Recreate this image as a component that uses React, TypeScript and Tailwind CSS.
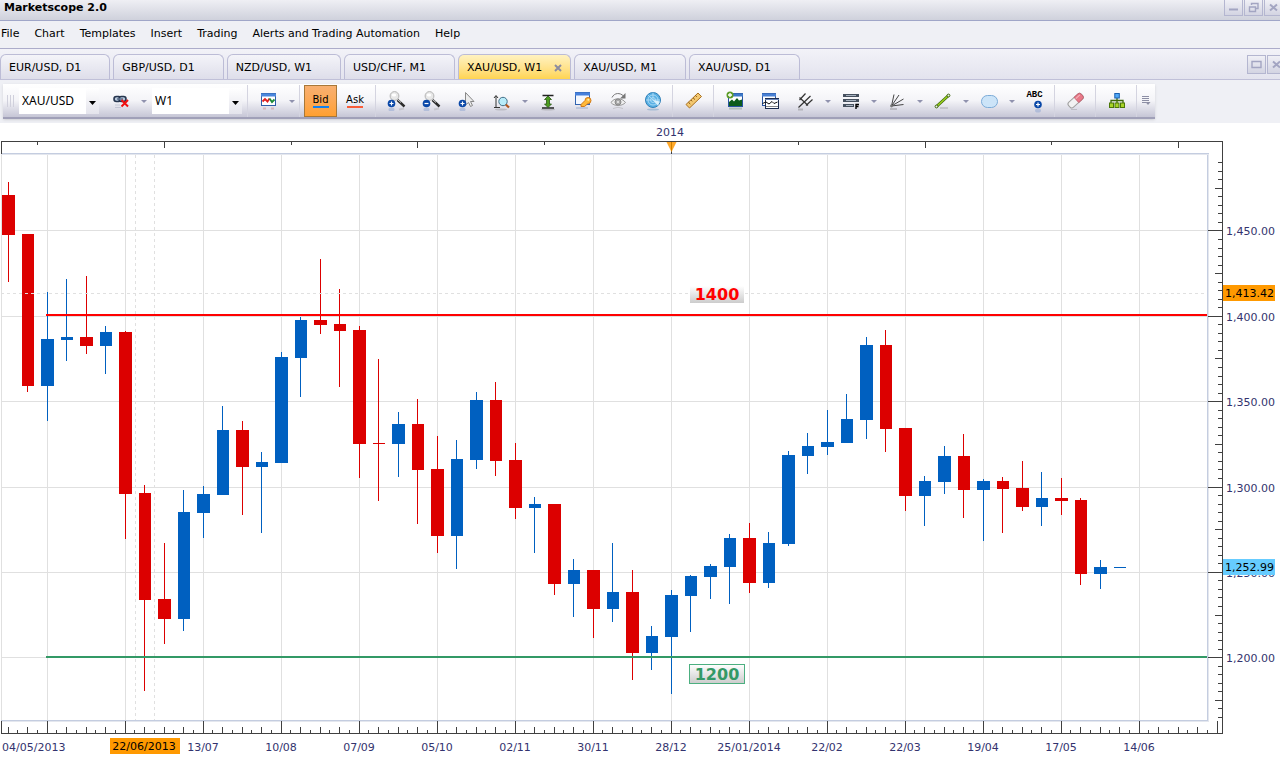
import type { ReactNode } from 'react';

const MENU = ['File', 'Chart', 'Templates', 'Insert', 'Trading', 'Alerts and Trading Automation', 'Help'];

const TABS = ['EUR/USD, D1', 'GBP/USD, D1', 'NZD/USD, W1', 'USD/CHF, M1', 'XAU/USD, W1', 'XAU/USD, M1', 'XAU/USD, D1'];
const ACTIVE_TAB = 4;

const RED = '#dc0000';
const BLUE = '#0060c0';

// [up, high, body top, body bottom, low], one per week
const CANDLES: [number, number, number, number, number][] = [
  [0, 182, 195, 235, 282],
  [0, 234, 234, 386, 392],
  [1, 292, 339, 386, 421],
  [1, 279, 337, 340, 361],
  [0, 276, 337, 346, 354],
  [1, 326, 332, 346, 374],
  [0, 331, 332, 494, 539],
  [0, 485, 493, 600, 691],
  [0, 543, 599, 619, 644],
  [1, 490, 512, 619, 631],
  [1, 486, 494, 513, 538],
  [1, 406, 430, 495, 495],
  [0, 421, 430, 467, 515],
  [1, 452, 462, 467, 533],
  [1, 352, 357, 463, 463],
  [1, 317, 320, 358, 397],
  [0, 259, 320, 325, 334],
  [0, 289, 324, 331, 387],
  [0, 326, 330, 444, 478],
  [0, 359, 443, 444, 501],
  [1, 412, 424, 444, 477],
  [0, 399, 424, 470, 524],
  [0, 436, 469, 536, 553],
  [1, 440, 459, 536, 569],
  [1, 392, 400, 460, 469],
  [0, 382, 400, 461, 476],
  [0, 443, 460, 508, 519],
  [1, 497, 504, 508, 553],
  [0, 504, 504, 584, 595],
  [1, 559, 570, 584, 617],
  [0, 570, 570, 609, 638],
  [1, 543, 592, 609, 622],
  [0, 570, 592, 653, 680],
  [1, 626, 636, 653, 670],
  [1, 590, 595, 637, 694],
  [1, 575, 576, 596, 632],
  [1, 564, 566, 577, 599],
  [1, 534, 538, 567, 604],
  [0, 523, 538, 583, 593],
  [1, 532, 543, 583, 588],
  [1, 451, 455, 544, 546],
  [1, 433, 446, 456, 474],
  [1, 410, 442, 447, 455],
  [1, 394, 419, 443, 443],
  [1, 337, 345, 420, 439],
  [0, 330, 345, 429, 452],
  [0, 428, 428, 496, 511],
  [1, 476, 481, 496, 526],
  [1, 446, 456, 482, 494],
  [0, 434, 456, 490, 518],
  [1, 479, 481, 490, 541],
  [0, 477, 481, 489, 533],
  [0, 461, 488, 507, 511],
  [1, 472, 498, 507, 526],
  [0, 478, 498, 501, 515],
  [0, 498, 500, 574, 585],
  [1, 560, 567, 574, 589],
  [1, 567, 567, 568, 568],
];

const DATES = ['13/07', '10/08', '07/09', '05/10', '02/11', '30/11', '28/12', '25/01/2014', '22/02', '22/03', '19/04', '17/05', '14/06'];

const PRICES = [1450, 1400, 1350, 1300, 1250, 1200];

const priceY = (price: number) => Math.round(657.2 - (price - 1200) * 1.707);
const weekX = (i: number) => Math.floor(8 + 19.5 * i);

function Chart() {
  const rightTicks = Array.from({ length: 66 }, (_, i) => 1165 + i * 5);
  const bottomTicks = Array.from({ length: 124 }, (_, i) => i);
  const topTicks = Array.from({ length: 10 }, (_, i) => i);
  const columns = Array.from({ length: 15 }, (_, i) => 47 + 78 * i);

  return (
    <svg
      viewBox="0 123 1280 636"
      className="block w-full bg-white font-['DejaVu_Sans',Verdana,sans-serif] text-[11px]"
      role="img"
      aria-label="XAU/USD, W1"
    >
      <defs>
        <linearGradient id="label" x1="0" y1="0" x2="0" y2="1">
          <stop offset="0" stopColor="#ffffff" />
          <stop offset="1" stopColor="#cccccc" />
        </linearGradient>
      </defs>

      <g shapeRendering="crispEdges">
        {/* grid */}
        <g fill="#e0e0e0">
          <rect x="1" y="155" width="1" height="566" />
          {columns.map((x) => (
            <rect key={x} x={x} y="155" width="1" height="566" />
          ))}
          {PRICES.map((p) => (
            <rect key={p} x="1" y={priceY(p)} width="1206" height="1" />
          ))}
        </g>
        <g fill="#c4cde0">
          <rect x="1" y="153" width="1208" height="1" />
          <rect x="1207" y="153" width="1" height="568" />
          <rect x="1" y="720" width="1208" height="1" />
        </g>
        <g fill="#e4e7ee">
          <rect x="1" y="154" width="1207" height="1" />
          <rect x="1208" y="154" width="1" height="568" />
          <rect x="1" y="721" width="1208" height="1" />
        </g>
        <path d="M135.5 155V720M154.5 155V720" stroke="#e0e0e0" strokeDasharray="3 3" />

        {/* axes */}
        <g fill="#404040">
          <rect x="1" y="141" width="1222" height="1" />
          <rect x="1" y="141" width="1" height="13" />
          <rect x="1222" y="141" width="1" height="593" />
          <rect x="1" y="733" width="1222" height="1" />
          <rect x="1" y="721" width="1" height="12" />
          <rect x="1217" y="721" width="1" height="12" />
          {topTicks.map((i) => (
            <rect key={i} x={Math.round(37 + 126.8 * i)} y="142" width="1" height={i === 5 ? 12 : i % 2 ? 6 : 3} />
          ))}
          {rightTicks.map((p) => {
            const w = p % 50 === 0 ? 14 : p % 25 === 0 ? 7 : 4;
            return <rect key={p} x={1222 - w} y={priceY(p)} width={w} height="1" />;
          })}
          {bottomTicks.map((i) => {
            const h = i % 8 === 4 ? 12 : i % 2 ? 3 : 6;
            return <rect key={i} x={Math.floor(8 + 9.75 * i)} y={733 - h} width="1" height={h} />;
          })}
        </g>

        {/* candles */}
        {CANDLES.map(([up, high, top, bottom, low], i) => {
          const x = weekX(i);
          const odd = i % 2 === 1;
          return (
            <g key={i} fill={up ? BLUE : RED}>
              <rect x={x} y={high} width="1" height={low - high} />
              <rect x={odd ? x - 5 : x - 6} y={top} width={odd ? 12 : 13} height={bottom - top} />
            </g>
          );
        })}

        <path d="M1 293.5H1207" stroke="#e0e0e0" strokeDasharray="3 3" />
        <rect x="46" y="314" width="1161" height="2" fill="#ff0000" />
        <rect x="46" y="656" width="1161" height="2" fill="#339966" />

        {/* level labels */}
        <rect x="690" y="286" width="54" height="17" fill="url(#label)" />
        <rect x="689.5" y="664.5" width="55" height="19" fill="url(#label)" stroke="#4caf80" />
      </g>

      <path d="M666.5 142H676.5L671.5 152Z" fill="#ffa829" />
      <path d="M671.5 142V151" stroke="#d08000" />

      <g textAnchor="middle" className="text-base font-bold">
        <text x="717" y="300" fill="#ff0000">1400</text>
        <text x="717" y="680" fill="#339966">1200</text>
      </g>

      <g fill="#33336e">
        <text x="670" y="136" textAnchor="middle">2014</text>
        {PRICES.map((p) => (
          <text key={p} x="1226" y={priceY(p) + 5}>
            {p.toLocaleString('en-US', { minimumFractionDigits: 2 })}
          </text>
        ))}
        <text x="2" y="751">04/05/2013</text>
        {DATES.map((d, i) => (
          <text key={d} x={203 + 78 * i} y="751" textAnchor="middle">
            {d}
          </text>
        ))}
      </g>

      <rect x="110" y="738" width="70" height="16" fill="#ff9900" />
      <rect x="1223" y="285" width="52" height="16" fill="#ff9900" />
      <rect x="1223" y="559" width="52" height="16" fill="#66ccff" />
      <g fill="#000000">
        <text x="144" y="750" textAnchor="middle">22/06/2013</text>
        <text x="1225" y="297">1,413.42</text>
        <text x="1225" y="571">1,252.99</text>
      </g>
    </svg>
  );
}

function WindowButton({ label, children, large }: { label: string; children: ReactNode; large?: boolean }) {
  return (
    <button
      aria-label={label}
      className={`flex w-[19px] items-center justify-center border border-[#b4b6d0] bg-gradient-to-b from-[#f0f0f6] to-[#d3d4e2] ${
        large ? 'h-[19px]' : 'h-4 border-t-0'
      }`}
    >
      <svg width="11" height="11" viewBox="0 0 11 11" fill="none" stroke="#a3a5c2" strokeWidth="2">
        {children}
      </svg>
    </button>
  );
}

function Section({ children }: { children: ReactNode }) {
  return <div className="flex items-center border-r border-[#d4d4e0] pr-0.5 pl-[3px]">{children}</div>;
}

function Tool({ label, children }: { label: string; children: ReactNode }) {
  return (
    <button aria-label={label} className="flex h-8 w-[35px] items-center justify-center">
      <svg width="20" height="20" viewBox="0 0 20 20" fill="none">
        {children}
      </svg>
    </button>
  );
}

function More({ label }: { label: string }) {
  return (
    <button aria-label={label} className="flex h-8 w-[11px] items-center justify-center">
      <svg width="6" height="3" viewBox="0 0 6 3" fill="#9092ae">
        <path d="M0 0H6L3 3Z" />
      </svg>
    </button>
  );
}

function Combo({ label, value, options, className }: { label: string; value: string; options: string[]; className: string }) {
  return (
    <label className={`relative flex h-[26px] items-center ${className}`}>
      <select
        aria-label={label}
        defaultValue={value}
        className="h-full w-full appearance-none bg-white pr-4 pl-[3px] font-['Noto_Sans',sans-serif] text-xs text-black"
      >
        {options.map((o) => (
          <option key={o}>{o}</option>
        ))}
      </select>
      <span className="pointer-events-none absolute right-0 flex h-[26px] w-[13px] items-center justify-center bg-gradient-to-b from-white to-[#e4e4ec] pt-1">
        <svg width="7" height="4" viewBox="0 0 7 4">
          <path d="M0 0H7L3.5 4Z" fill="#000" />
        </svg>
      </span>
    </label>
  );
}

// small blue disc with a plus or minus sign
function Badge({ x, y, minus }: { x: number; y: number; minus?: boolean }) {
  return (
    <g>
      <circle cx={x} cy={y} r="3.8" fill="#0a48a8" />
      <path d={minus ? `M${x - 2} ${y}h4` : `M${x - 2} ${y}h4M${x} ${y - 2}v4`} stroke="#fff" strokeWidth="1.2" />
      <ellipse cx={x} cy={y + 6} rx="3" ry="2" fill="#7090c8" opacity=".35" />
    </g>
  );
}

function Magnifier({ minus }: { minus?: boolean }) {
  return (
    <>
      <path d="M10.5 9L17.5 15.5" stroke="#2b2b2b" strokeWidth="2.4" />
      <path d="M10.5 8.5L14 11.5" stroke="#d8d8d8" />
      <circle cx="7.5" cy="5" r="4.4" fill="#e8e8e8" stroke="#b4b4b4" />
      <ellipse cx="7" cy="4" rx="2.2" ry="1.6" fill="#fff" />
      <path d="M12 18.5L17 17.5" stroke="#999" strokeWidth="2" opacity=".3" />
      <Badge x={4.5} y={12.5} minus={minus} />
    </>
  );
}

function Toolbar() {
  return (
    <div className="ml-[3px] flex h-[35px] w-fit border-b-2 border-[#a0a0b8] bg-gradient-to-b from-white via-[#f4f4f8] to-[#c6c6d6] pt-px shadow-sm">
      <div className="flex items-center border-r border-[#d4d4e0] pr-[5px]">
        <span className="flex h-4 w-4 items-center gap-0.5 pl-1">
          <i className="h-3 w-px bg-[#d0d0dc]" />
          <i className="h-3 w-px bg-[#d0d0dc]" />
          <i className="h-3 w-px bg-[#d0d0dc]" />
        </span>
        <Combo label="Symbol" value="XAU/USD" options={['XAU/USD', 'EUR/USD', 'GBP/USD', 'NZD/USD', 'USD/CHF']} className="mr-1 w-20" />
        <Tool label="Unlink">
          <g stroke="#27364f" strokeWidth="1.6">
            <rect x="3" y="5.5" width="7" height="5" rx="2.4" fill="#b8c8dc" />
            <rect x="8" y="5.5" width="7" height="5" rx="2.4" fill="#b8c8dc" />
            <path d="M6 8H12" stroke="#5e7290" />
          </g>
          <path d="M10.5 9L17 15.5M17 9L10.5 15.5" stroke="#f01010" strokeWidth="2" />
          <path d="M4 14H9M4 16.5H10" stroke="#8890a8" opacity=".35" />
        </Tool>
        <More label="Link options" />
        <Combo label="Period" value="W1" options={['D1', 'W1', 'M1']} className="ml-[3px] w-[90px]" />
      </div>

      <Section>
        <Tool label="Chart type">
          <rect x="2.5" y="2.5" width="14" height="12" fill="#fff" stroke="#2f5ea8" />
          <path d="M2 4H17" stroke="#4a86dc" strokeWidth="3" />
          <path d="M3.5 10.5L6 8L8.5 10.5L10.5 7.5" stroke="#e02020" strokeWidth="1.8" />
          <path d="M10.5 7.5L13 11L15.5 8.5" stroke="#1c8a38" strokeWidth="1.8" />
          <path d="M4 17.5H7M12 17.5H15" stroke="#cc7777" strokeWidth="2" opacity=".4" />
        </Tool>
        <More label="Chart types" />
      </Section>

      <Section>
        <button className="ml-px flex h-8 w-[33px] flex-col items-center justify-center border border-[#a87838] bg-gradient-to-b from-[#f8b070] to-[#ffa030] text-[10px] leading-3 text-black">
          Bid
          <span className="h-0.5 w-4 bg-[#1080f0]" />
        </button>
        <button className="flex h-8 w-9 flex-col items-center justify-center text-[10px] leading-3 text-black">
          Ask
          <span className="h-0.5 w-4 bg-[#f85c38]" />
        </button>
      </Section>

      <Section>
        <Tool label="Zoom in">
          <Magnifier />
        </Tool>
        <Tool label="Zoom out">
          <Magnifier minus />
        </Tool>
        <Tool label="Zoom to cursor">
          <path d="M8.5 1.5V14L11.5 11.5L13.5 15.5L15.5 14.5L13.5 10.5H17Z" fill="#ececec" stroke="#888" />
          <Badge x={5.5} y={12.5} />
        </Tool>
        <Tool label="Axis zoom">
          <path d="M4 5V17M2 7L4 4.5L6 7M2 16.5H8" stroke="#333" />
          <circle cx="11" cy="10.5" r="4.2" fill="#b8ecfa" stroke="#447088" />
          <path d="M13.8 13.5L17 16.5" stroke="#b05820" strokeWidth="2.2" />
          <ellipse cx="9" cy="18.5" rx="6" ry="1" fill="#777" opacity=".3" />
        </Tool>
        <More label="Axis zoom options" />
        <Tool label="Fit height">
          <path d="M4.5 4.5H15.5M4 17H16" stroke="#222" strokeWidth="1.6" />
          <path d="M10 5L13.5 8.5H11.5V13H13.5L10 16.5L6.5 13H8.5V8.5H6.5Z" fill="#4c9c20" stroke="#285810" strokeWidth=".8" />
          <ellipse cx="10" cy="18.5" rx="7" ry="1" fill="#777" opacity=".35" />
        </Tool>
        <Tool label="Chart properties">
          <rect x="2.5" y="1.5" width="14" height="12" fill="#f4f8ff" stroke="#3264b0" />
          <path d="M2 3H17" stroke="#4680dc" strokeWidth="3" />
          <path d="M12 9.5A3 3 0 1 1 15 12.5L11.5 15.5H8V13.5Z" fill="#ffb838" stroke="#d07818" />
          <circle cx="15.3" cy="8.8" r="1" fill="#fff0b0" />
          <path d="M3 17H15" stroke="#7090c0" strokeWidth="2" opacity=".3" />
        </Tool>
        <Tool label="Hide objects">
          <path d="M3 11.5C6 6.5 14 6.5 17.5 11.5C14 15.5 6 15.5 3 11.5Z" fill="#eee" stroke="#999" />
          <circle cx="10" cy="11" r="3" fill="#aaa" stroke="#888" />
          <circle cx="10" cy="11" r="1" fill="#eee" />
          <path d="M4 6.5C6.5 1.5 12 1.5 15.5 5" stroke="#777" />
          <path d="M17.5 2V7.5H12Z" fill="#777" />
          <path d="M5 17.5Q10 15 15 17.5" stroke="#999" opacity=".4" />
        </Tool>
        <Tool label="Web">
          <circle cx="10" cy="9" r="7.5" fill="#58b0e4" stroke="#3080b8" />
          <g stroke="#b8e0f8" strokeWidth=".8">
            <circle cx="10" cy="9" r="5" />
            <circle cx="10" cy="9" r="2.5" />
            <path d="M10 1.5V9L15 14.5M3 9H17M5 4L15 14" />
          </g>
          <path d="M10 9L17 10.5L15 14.5Z" fill="#d8f0fc" />
          <ellipse cx="10" cy="18.5" rx="6" ry="1" fill="#4888b8" opacity=".35" />
        </Tool>
      </Section>

      <Section>
        <Tool label="Ruler">
          <path d="M2 13.5L14 2L17.5 5.5L5.5 17Z" fill="#f4c870" stroke="#a87020" />
          <path d="M4.5 11.3L6.3 13M6.8 9L8.1 10.3M9.1 6.8L10.9 8.5M11.5 4.5L12.7 5.8" stroke="#80500c" />
        </Tool>
      </Section>

      <Section>
        <Tool label="Add indicator">
          <rect x="3.5" y="2.5" width="14" height="13" fill="#fff" stroke="#2854a0" />
          <path d="M3 4H18" stroke="#3c78c8" strokeWidth="3" />
          <path d="M4 15V11L7 8.5L9 10.5L12 7L14 9.5L17 8.5V15Z" fill="#0c5c1c" />
          <circle cx="5" cy="4" r="3.5" fill="#5c9c28" />
          <path d="M3 4H7M5 2V6" stroke="#fff" strokeWidth="1.3" />
          <path d="M4 17.5H17" stroke="#487858" strokeWidth="2" opacity=".3" />
        </Tool>
        <Tool label="Add view">
          <rect x="2.5" y="2.5" width="13" height="12" fill="#fff" stroke="#2854a0" />
          <path d="M2 4H16" stroke="#4880d4" strokeWidth="3" />
          <rect x="5.5" y="7.5" width="13" height="10" fill="#fff" stroke="#1c2c50" />
          <path d="M5 8.5H19" stroke="#6884b8" />
          <path d="M2.5 12.5L6 11L9 13L12 10.5L14 12.5L17.5 11" stroke="#111" />
          <path d="M6 15.5H18" stroke="#888" />
        </Tool>
        <Tool label="Pitchfork">
          <path
            d="M3.5 16.5L15.5 5M4.5 9L10.5 2.5M11 14.5L17.5 8.5M4.5 6.5L13 14.5"
            stroke="#333"
            strokeWidth="1.2"
          />
          <path d="M3 18.5H8" stroke="#777" opacity=".4" strokeWidth="2" />
        </Tool>
        <More label="Pitchfork tools" />
        <Tool label="Fibonacci">
          <path d="M2 4.5H18M2 9.5H18M2 14.5H13" stroke="#46505e" strokeWidth="3" />
          <path d="M5 4.5H15M5 9.5H15M5 14.5H12" stroke="#c0ccd8" strokeWidth=".8" />
          <path d="M15 18V13.5H18M15 15.5H17.5" stroke="#000" strokeWidth="1.4" />
        </Tool>
        <More label="Fibonacci tools" />
        <Tool label="Fan">
          <path d="M4.5 15L7 3.5M4.5 15L12 4M4.5 15L16.5 8M4.5 15L16.5 13.5" stroke="#444" />
          <circle cx="4.5" cy="15" r="1.4" fill="#777" />
          <path d="M3 18H10" stroke="#777" opacity=".35" strokeWidth="2" />
        </Tool>
        <More label="Fan tools" />
        <Tool label="Line">
          <path d="M3.5 15.5L15.5 4.5" stroke="#3c6808" strokeWidth="3" />
          <path d="M3.5 15.5L15.5 4.5" stroke="#9cd020" strokeWidth="1.6" />
          <circle cx="3.5" cy="15.5" r="1.4" fill="#eee" stroke="#3c6808" />
          <circle cx="15.5" cy="4.5" r="1.4" fill="#eee" stroke="#3c6808" />
          <path d="M7 17H15" stroke="#777" opacity=".25" strokeWidth="2" />
        </Tool>
        <More label="Line tools" />
        <Tool label="Ellipse">
          <rect x="2.5" y="4.5" width="16" height="12" rx="6" fill="#cce4f8" stroke="#7cacd8" />
        </Tool>
        <More label="Shapes" />
        <button className="flex h-8 w-[35px] flex-col items-center pt-1.5 text-[9px] leading-[9px] font-bold text-black">
          <span className="font-['Liberation_Mono',monospace]">ABC</span>
          <svg width="11" height="14" viewBox="0 0 11 14" fill="none" className="ml-2 shrink-0">
            <Badge x={5} y={4.5} />
          </svg>
        </button>
      </Section>

      <Section>
        <Tool label="Erase">
          <g transform="rotate(-42 10 10)">
            <rect x="1.5" y="6" width="17" height="7" rx="2.5" fill="#f2f2f2" stroke="#a0a0a0" />
            <path d="M11 6H16A2.5 2.5 0 0 1 18.5 8.5V10.5A2.5 2.5 0 0 1 16 13H11Z" fill="#e87888" stroke="#c05868" strokeWidth=".8" />
            <path d="M11.5 8H17" stroke="#f8b4bc" />
          </g>
          <path d="M5 18.5H11" stroke="#777" opacity=".3" />
        </Tool>
      </Section>

      <Section>
        <Tool label="Object tree">
          <path d="M10 7V12M4 12.5V9.5H16V12.5" stroke="#3c6808" strokeWidth="1.3" />
          <rect x="7.8" y="2.5" width="4.5" height="4.5" fill="#50a8f8" stroke="#1860b0" />
          <g fill="#a8d428" stroke="#4c7808">
            <rect x="2.5" y="12" width="4" height="4.5" />
            <rect x="8" y="12" width="4" height="4.5" />
            <rect x="13.5" y="12" width="4" height="4.5" />
          </g>
        </Tool>
      </Section>

      <button aria-label="Toolbar options" className="flex w-[18px] items-center justify-center">
        <svg width="10" height="10" viewBox="0 0 10 10" fill="none" stroke="#8c8ea4">
          <path d="M1 .5H8M1 2.5H8M1 4.5H8M1 6.5H5" />
          <path d="M4.5 6H9.5L7 9Z" fill="#8c8ea4" stroke="none" />
        </svg>
      </button>
    </div>
  );
}

export default function App() {
  return (
    <div className="min-h-screen w-full overflow-hidden bg-white font-['DejaVu_Sans',Verdana,sans-serif] text-[11px] text-black">
      <header className="flex h-[21px] items-start justify-between border-b border-[#a0a6c8] bg-gradient-to-b from-[#efeff4] to-[#cfd1dc]">
        <h1 className="pl-1 leading-[15px] font-bold">Marketscope 2.0</h1>
        <div className="-mr-[3px] flex gap-px">
          <WindowButton label="Minimize">
            <path d="M1 7.5H10" />
          </WindowButton>
          <WindowButton label="Restore">
            <path d="M3.5 3V1.5H10V6.5H8M1.5 5H7.5V9.5H1.5Z" strokeWidth="1.4" />
          </WindowButton>
          <WindowButton label="Close">
            <path d="M2 2.5L9 8.5M9 2.5L2 8.5" />
          </WindowButton>
        </div>
      </header>

      <nav className="flex h-7 items-center gap-[15px] border-b border-[#acacca] bg-[#eff0f5] pb-px pl-px">
        {MENU.map((m) => (
          <button key={m}>{m}</button>
        ))}
      </nav>

      <div className="flex h-[31px] items-end justify-between border-b border-[#c0c0d8] bg-gradient-to-b from-[#f2f2f8] to-[#e3e3ee]">
        <div role="tablist" className="flex gap-[3px]">
          {TABS.map((t, i) => (
            <button
              key={t}
              role="tab"
              aria-selected={i === ACTIVE_TAB}
              className={`flex h-[25px] items-center rounded-t-md border border-b-0 border-[#bcbcd6] pt-0.5 pl-2 ${
                i === ACTIVE_TAB
                  ? 'gap-3 bg-gradient-to-b from-[#fff2c0] via-[#ffe490] to-[#ffd450] pr-2'
                  : 'bg-gradient-to-b from-[#f4f4f9] to-[#dedeea] pr-7'
              }`}
            >
              {t}
              {i === ACTIVE_TAB && (
                <svg width="8" height="8" viewBox="0 0 8 8" stroke="#8c8ca0" strokeWidth="2">
                  <path d="M1 1L7 7M7 1L1 7" />
                </svg>
              )}
            </button>
          ))}
        </div>
        <div className="-mr-[6px] flex gap-px self-center">
          <WindowButton label="Restore chart" large>
            <path d="M1 2.5H10V8.5H1Z" strokeWidth="1.4" />
          </WindowButton>
          <WindowButton label="Close chart" large>
            <path d="M2 2.5L9 8.5M9 2.5L2 8.5" />
          </WindowButton>
        </div>
      </div>

      <div className="bg-[#eff0f5] pt-1 pb-1">
        <Toolbar />
      </div>

      <main>
        <Chart />
      </main>
    </div>
  );
}
